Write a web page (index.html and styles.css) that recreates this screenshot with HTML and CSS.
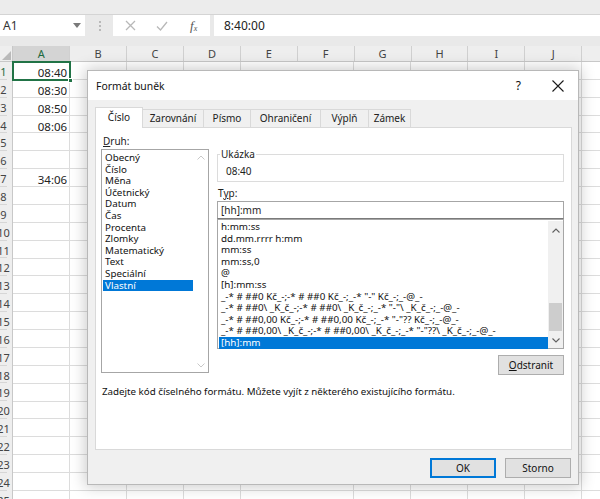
FILE: index.html
```html
<!DOCTYPE html>
<html lang="cs">
<head>
<meta charset="utf-8">
<title>Formát buněk</title>
<link rel="stylesheet" href="styles.css">
</head>
<body>
<div class="ribbon">
  <span class="rl rl1">Schránka</span>
  <span class="rl rl2">Písmo</span>
  <span class="rl rl3">Písmo</span>
  <span class="rl rl4">Písmo</span>
  <span class="rl rl5">Zarovnání</span>
</div>
<div class="fbar">
  <div class="namebox"><span>A1</span><svg class="nbarrow" width="8" height="5" viewBox="0 0 8 5"><path d="M0 0h8L4 5z" fill="#7a7a7a"/></svg></div>
  <div class="sep"><i></i><i></i><i></i></div>
  <div class="fbtns">
    <svg width="11" height="11" viewBox="0 0 11 11"><path d="M1 1L10 10M10 1L1 10" stroke="#b8b8b8" stroke-width="1.3"/></svg>
    <svg width="12" height="10" viewBox="0 0 12 10"><path d="M1 5.5L4.5 9L11 1" fill="none" stroke="#b8b8b8" stroke-width="1.3"/></svg>
    <span class="fx">f<sub>x</sub></span>
  </div>
  <div class="finput">8:40:00</div>
</div>
<div class="colheads">
  <div class="corner"><svg width="9" height="9" viewBox="0 0 9 9"><path d="M9 0V9H0z" fill="#b9b9b9"/></svg></div>
  <div class="ch sel">A</div><div class="ch">B</div><div class="ch">C</div><div class="ch">D</div><div class="ch">E</div><div class="ch">F</div><div class="ch">G</div><div class="ch">H</div><div class="ch">I</div><div class="ch">J</div><div class="ch">K</div>
</div>
<div class="sheet">
  <div class="rowheads">
    <div class="rh sel">1</div><div class="rh">2</div><div class="rh">3</div><div class="rh">4</div><div class="rh">5</div>
    <div class="rh">6</div><div class="rh">7</div><div class="rh">8</div><div class="rh">9</div><div class="rh">10</div>
    <div class="rh">11</div><div class="rh">12</div><div class="rh">13</div><div class="rh">14</div><div class="rh">15</div>
    <div class="rh">16</div><div class="rh">17</div><div class="rh">18</div><div class="rh">19</div><div class="rh">20</div>
    <div class="rh">21</div><div class="rh">22</div><div class="rh">23</div><div class="rh">24</div><div class="rh">25</div>
  </div>
  <div class="cells">
    <div class="colA">
      <div class="cell">08:40</div><div class="cell">08:30</div><div class="cell">08:50</div><div class="cell">08:06</div>
      <div class="cell"></div><div class="cell"></div><div class="cell">34:06</div>
    </div>
    <div class="selbox"><i class="handle"></i></div>
  </div>
</div>

<div class="dialog">
  <div class="titlebar">
    <span class="title">Formát buněk</span>
    <span class="help">?</span>
    <svg class="close" width="12" height="12" viewBox="0 0 12 12"><path d="M0.5 0.5L11.5 11.5M11.5 0.5L0.5 11.5" stroke="#1a1a1a" stroke-width="1.1"/></svg>
  </div>
  <div class="dbody">
    <div class="tabs">
      <div class="tab active t1">Číslo</div>
      <div class="tab t2">Zarovnání</div>
      <div class="tab t3">Písmo</div>
      <div class="tab t4">Ohraničení</div>
      <div class="tab t5">Výplň</div>
      <div class="tab t6">Zámek</div>
    </div>
    <div class="panel">
      <div class="cols">
        <div class="left">
          <div class="lbl"><u>D</u>ruh:</div>
          <div class="catlist">
            <div class="items">
              <div class="it">Obecný</div><div class="it">Číslo</div><div class="it">Měna</div><div class="it">Účetnický</div>
              <div class="it">Datum</div><div class="it">Čas</div><div class="it">Procenta</div><div class="it">Zlomky</div>
              <div class="it">Matematický</div><div class="it">Text</div><div class="it">Speciální</div><div class="it on">Vlastní</div>
            </div>
            <div class="vscroll light">
              <svg width="8" height="5" viewBox="0 0 8 5"><path d="M0.5 4.5L4 1L7.5 4.5" fill="none" stroke="#c8c8c8" stroke-width="1"/></svg>
              <svg width="8" height="5" viewBox="0 0 8 5"><path d="M0.5 0.5L4 4L7.5 0.5" fill="none" stroke="#c8c8c8" stroke-width="1"/></svg>
            </div>
          </div>
        </div>
        <div class="right">
          <div class="sample">
            <div class="legend">Ukázka</div>
            <div class="sval">08:40</div>
          </div>
          <div class="lbl typ">T<u>y</u>p:</div>
          <div class="tinput">[hh]:mm</div>
          <div class="fmtlist">
            <div class="items">
              <div class="it">h:mm:ss</div>
              <div class="it">dd.mm.rrrr h:mm</div>
              <div class="it">mm:ss</div>
              <div class="it">mm:ss,0</div>
              <div class="it">@</div>
              <div class="it">[h]:mm:ss</div>
              <div class="it">_-* # ##0 Kč_-;-* # ##0 Kč_-;_-* "-" Kč_-;_-@_-</div>
              <div class="it">_-* # ##0\ _K_č_-;-* # ##0\ _K_č_-;_-* "-"\ _K_č_-;_-@_-</div>
              <div class="it">_-* # ##0,00 Kč_-;-* # ##0,00 Kč_-;_-* "-"?? Kč_-;_-@_-</div>
              <div class="it">_-* # ##0,00\ _K_č_-;-* # ##0,00\ _K_č_-;_-* "-"??\ _K_č_-;_-@_-</div>
              <div class="it on">[hh]:mm</div>
            </div>
            <div class="vscroll dark">
              <svg width="8" height="5" viewBox="0 0 8 5"><path d="M0.5 4.5L4 1L7.5 4.5" fill="none" stroke="#606060" stroke-width="1.1"/></svg>
              <div class="track"><div class="thumb"></div></div>
              <svg width="8" height="5" viewBox="0 0 8 5"><path d="M0.5 0.5L4 4L7.5 0.5" fill="none" stroke="#606060" stroke-width="1.1"/></svg>
            </div>
          </div>
          <div class="delrow"><div class="btn del"><u>O</u>dstranit</div></div>
        </div>
      </div>
      <p class="desc">Zadejte kód číselného formátu. Můžete vyjít z některého existujícího formátu.</p>
    </div>
    <div class="buttons">
      <div class="btn ok">OK</div>
      <div class="btn">Storno</div>
    </div>
  </div>
</div>
</body>
</html>
```
FILE: styles.css
```css
* { box-sizing: border-box; margin: 0; padding: 0; }
html, body { width: 600px; height: 499px; overflow: hidden; }
body {
  font-family: "Noto Sans", "Liberation Sans", sans-serif;
  background: #fff;
  color: #1e1e1e;
  position: relative;
}

/* ribbon remnant */
.ribbon {
  height: 15px;
  background: #ececec;
  border-bottom: 1px solid #d4d4d4;
  overflow: hidden;
  display: flex;
  font-size: 11px;
  color: #6a6a6a;
}
.rl { margin-top: -11px; line-height: 14px; white-space: nowrap; }
.rl1 { margin-left: 38px; }
.rl2 { margin-left: 38px; width: 8px; overflow: hidden; }
.rl3 { margin-left: 62px; width: 24px; overflow: hidden; }
.rl4 { margin-left: 66px; width: 8px; overflow: hidden; }
.rl5 { margin-left: 100px; }

/* formula bar */
.fbar {
  height: 31px;
  background: #e9e9e9;
  display: flex;
  align-items: flex-start;
}
.namebox {
  width: 85px;
  height: 21px;
  background: #fff;
  display: flex;
  align-items: center;
  justify-content: space-between;
  padding: 0 4px 0 3px;
  font-size: 12px;
  color: #333;
}
.sep {
  width: 28px;
  height: 21px;
  display: flex;
  flex-direction: column;
  align-items: center;
  justify-content: center;
  gap: 2px;
  padding-left: 1px;
}
.sep i { display: block; width: 2px; height: 2px; background: #b9b9b9; }
.fbtns {
  width: 97px;
  height: 21px;
  background: #fff;
  display: flex;
  align-items: center;
  padding-left: 12px;
  gap: 20px;
}
.fx { font-family: "Liberation Serif", serif; font-style: italic; font-size: 13px; color: #555; line-height: 1; margin-left: 2px; }
.fx sub { font-size: 8px; vertical-align: -1px; }
.finput {
  flex: 1;
  margin-left: 4px;
  height: 21px;
  background: #fff;
  font-size: 12px;
  line-height: 21px;
  padding-left: 10px;
  color: #222;
}

/* column headers */
.colheads {
  height: 16px;
  display: flex;
  background: #eeeeee;
  border-bottom: 1px solid #c8c8c8;
}
.corner {
  width: 13.3px;
  flex: none;
  display: flex;
  align-items: flex-end;
  justify-content: flex-end;
  padding: 0 1px 1px 0;
  border-right: 1px solid #c8c8c8;
}
.ch {
  width: 56.9px;
  flex: none;
  border-right: 1px solid #d0d0d0;
  font-size: 11px;
  color: #444;
  text-align: center;
  line-height: 15px;
}
.ch.sel { background: #d4d4d4; color: #1f6a3f; }

/* sheet */
.sheet { display: flex; height: 460px; }
.rowheads {
  width: 13.3px;
  flex: none;
  background: #eeeeee;
  border-right: 1px solid #c8c8c8;
}
.rh {
  height: 17.87px;
  border-bottom: 1px solid #d6d6d6;
  display: flex;
  justify-content: center;
  align-items: center;
  width: 7px;
  padding-top: 2px;
  font-size: 11px;
  color: #444;
  white-space: nowrap;
}
.rh.sel { color: #1f6a3f; }
.cells {
  flex: 1;
  position: relative;
  background-image:
    repeating-linear-gradient(90deg, transparent 0 55.9px, #dcdcdc 55.9px 56.9px),
    repeating-linear-gradient(180deg, transparent 0 16.87px, #dcdcdc 16.87px 17.87px);
}
.colA { width: 56.9px; }
.cell {
  height: 17.87px;
  font-size: 11.5px;
  text-align: right;
  padding: 2px 3px 0 0;
  line-height: 17px;
  color: #222;
}
.selbox {
  position: absolute;
  left: -1px;
  top: -1px;
  width: 59px;
  height: 20px;
  border: 2px solid #217346;
}
.handle {
  position: absolute;
  right: -4px;
  bottom: -4px;
  width: 5px;
  height: 5px;
  background: #217346;
  border: 1px solid #fff;
}

/* dialog */
.dialog {
  position: absolute;
  left: 87px;
  top: 70px;
  width: 492px;
  height: 415px;
  background: #f0f0f0;
  border: 1px solid #b8b8b8;
  box-shadow: 0 0 14px 2px rgba(0, 0, 0, 0.2);
  display: flex;
  flex-direction: column;
  font-size: 10px;
}
.titlebar {
  height: 29px;
  background: #fff;
  display: flex;
  align-items: center;
  padding-left: 8px;
}
.title { flex: 1; font-size: 10.4px; color: #111; }
.help { font-size: 12px; margin-right: 31px; color: #111; }
.close { margin-right: 14px; }
.dbody { flex: 1; padding: 7px 7px 0 7px; display: flex; flex-direction: column; }
.tabs { display: flex; height: 20px; align-items: flex-end; position: relative; z-index: 1; }
.tab {
  height: 18px;
  border: 1px solid #d9d9d9;
  border-bottom: none;
  margin-right: -1px;
  text-align: center;
  line-height: 16px;
  background: #f0f0f0;
  color: #222;
}
.tab.active {
  height: 21px;
  background: #fff;
  margin-bottom: -1px;
  line-height: 19px;
}
.t1 { width: 48px; }
.t2 { width: 62px; }
.t3 { width: 48px; }
.t4 { width: 71px; }
.t5 { width: 49px; }
.t6 { width: 43px; }
.panel {
  width: 477px;
  height: 323px;
  background: #fff;
  border: 1px solid #d9d9d9;
  padding: 6px 6px 0 5px;
}
.cols { display: flex; gap: 8px; }
.left { width: 108px; }
.lbl { line-height: 14px; padding-left: 2px; color: #222; }
.catlist {
  margin-top: 1px;
  height: 224px;
  border: 1px solid #a6a6a6;
  display: flex;
  padding: 2px 0 0 1px;
}
.items { flex: 1; min-width: 0; }
.it {
  height: 11.6px;
  line-height: 11.6px;
  font-size: 9.8px;
  padding-left: 2px;
  white-space: nowrap;
  overflow: hidden;
  color: #111;
}
.it.on { background: #0078d7; color: #fff; }
.vscroll {
  width: 15px;
  display: flex;
  flex-direction: column;
  align-items: center;
  justify-content: space-between;
  padding: 3px 0 4px;
}
.vscroll.dark { background: #f0f0f0; padding: 7px 0 5px; }
.track { flex: 1; width: 100%; display: flex; flex-direction: column; justify-content: flex-end; padding: 0 1px 7px; }
.thumb { height: 28px; background: #cdcdcd; }

.right { width: 347px; padding-top: 20px; }
.sample {
  height: 28px;
  border: 1px solid #dcdcdc;
  padding-left: 2px;
}
.legend {
  margin-top: -7px;
  width: fit-content;
  background: #fff;
  padding: 0 1px;
  line-height: 12px;
  color: #222;
}
.sval { padding-left: 6px; margin-top: 5px; line-height: 12px; }
.typ { margin-top: 4px; padding-left: 1px; }
.tinput {
  margin-top: 1px;
  height: 18px;
  border: 1px solid #a6a6a6;
  border-bottom-color: #7a7a7a;
  padding-left: 3px;
  line-height: 16px;
}
.fmtlist {
  height: 130px;
  border: 1px solid #a6a6a6;
  display: flex;
  padding: 1px 0 0 1px;
}
.delrow { display: flex; justify-content: flex-end; margin-top: 6px; }
.btn {
  height: 20px;
  border: 1px solid #adadad;
  background: #e1e1e1;
  text-align: center;
  line-height: 18px;
  color: #111;
}
.del { width: 66px; }
.desc { margin-top: 10px; padding-left: 1px; line-height: 14px; font-size: 9.75px; color: #111; }
.buttons { display: flex; justify-content: flex-end; gap: 9px; margin-top: 8px; }
.buttons .btn { width: 66px; }
.btn.ok { border: 2px solid #0078d7; line-height: 16px; }
```
